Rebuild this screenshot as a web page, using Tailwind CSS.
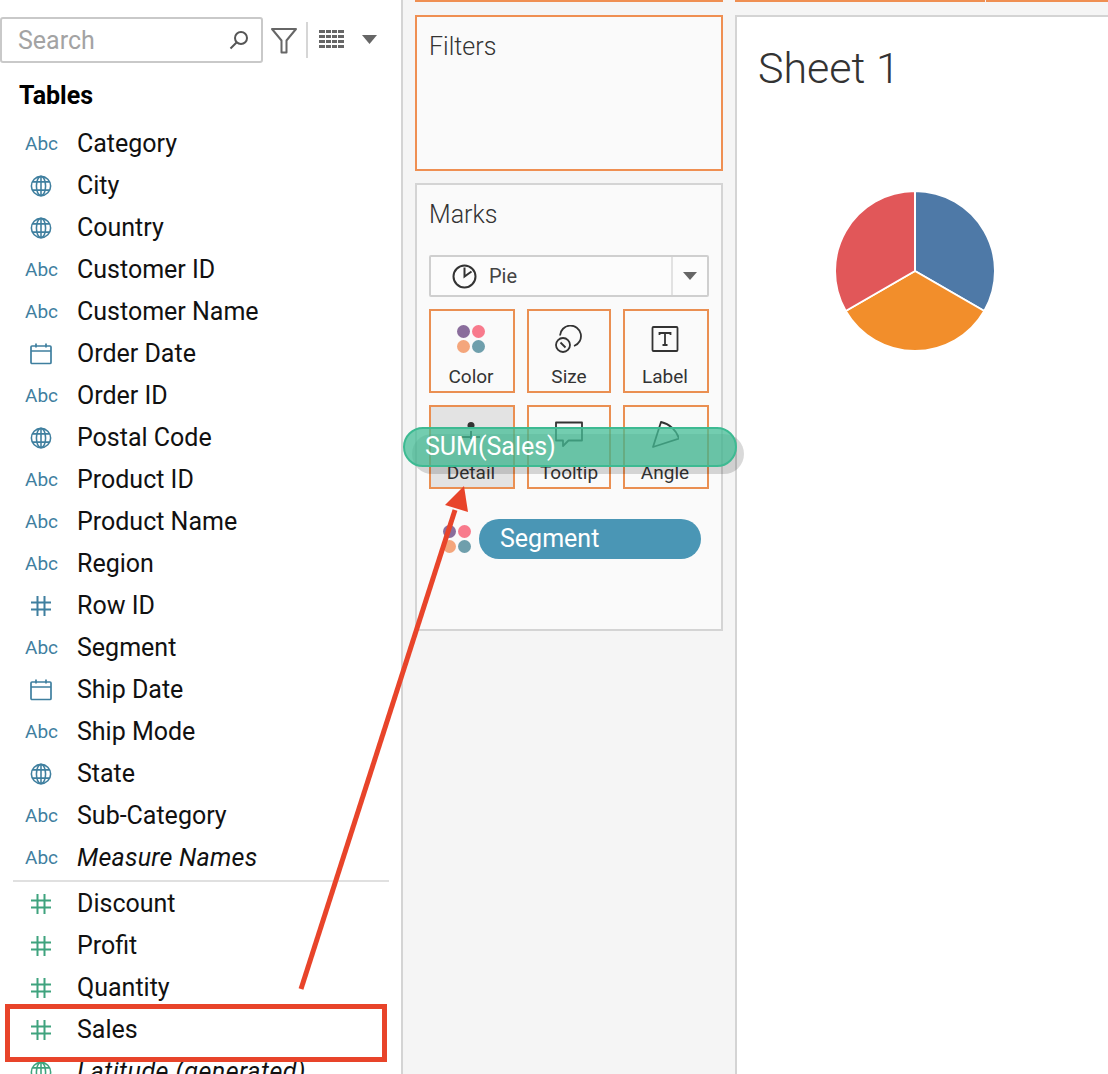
<!DOCTYPE html>
<html lang="en">
<head>
<meta charset="UTF-8">
<title>Sheet 1</title>
<script src="https://cdn.jsdelivr.net/npm/@tailwindcss/browser@4"></script>
</head>
<body class="bg-white">
<svg class="hidden">
  <symbol id="globe" viewBox="0 0 24 24" fill="none" stroke="currentColor" stroke-width="1.7">
    <circle cx="12" cy="12" r="10.5"/><ellipse cx="12" cy="12" rx="5" ry="10.5"/><path d="M12 1.5v21M2.6 7.5h18.8M2.6 16.5h18.8"/>
  </symbol>
  <symbol id="hash" viewBox="0 0 20 20" fill="none" stroke="currentColor" stroke-width="2">
    <path d="M6.5 0v20M13.5 0v20M0 6.5h20M0 13.5h20"/>
  </symbol>
  <symbol id="cal" viewBox="0 0 22 22" fill="none" stroke="currentColor" stroke-width="1.7">
    <rect x="1" y="3" width="20" height="17.5" rx="1"/><path d="M1 8h20M6 0.5v4M16 0.5v4"/>
  </symbol>
  <symbol id="dots" viewBox="0 0 28 28">
    <circle cx="6.5" cy="6.5" r="6.5" fill="#8a6d9c"/><circle cx="21.5" cy="6.5" r="6.5" fill="#f87a8c"/>
    <circle cx="6.5" cy="21.5" r="6.5" fill="#f4a67c"/><circle cx="21.5" cy="21.5" r="6.5" fill="#6f9fac"/>
  </symbol>
</svg>

<div class="relative flex h-[1074px] w-[1108px] overflow-hidden font-['Roboto',sans-serif] text-[25px] text-[#111]">

  <aside class="w-[401px] shrink-0 bg-white">
    <div class="flex h-[63px] items-end">
      <div class="flex h-[46px] w-[263px] items-center justify-between rounded-[3px] border-2 border-[#c9c9c9] pl-[16px] pr-[12px] text-[#a3a3a3]">
        <span class="pt-[2px]">Search</span>
        <svg class="h-[20px] w-[20px]" viewBox="0 0 20 20" fill="none" stroke="#555" stroke-width="2"><circle cx="12" cy="8" r="6"/><path d="M7.5 12.5 1.5 18.5"/></svg>
      </div>
      <svg class="mb-[9px] ml-[8px] h-[26px] w-[26px]" viewBox="0 0 26 26" fill="none" stroke="#666" stroke-width="2" stroke-linejoin="round"><path d="M1 1h24l-9.500 11.500V24.500h-5V12.500z"/></svg>
      <div class="mb-[5px] ml-[9px] h-[36px] w-[2px] bg-[#d6d6d6]"></div>
      <svg class="mb-[15px] ml-[11px] h-[18px] w-[25px]" viewBox="0 0 25 18" fill="#666"><path d="M0 0h25v3H0zM0 5h25v3H0zM0 10h25v3H0zM0 15h25v3H0z"/><path d="M6 0h1v18H6zM12 0h1v18h-1zM18 0h1v18h-1z" fill="#fff"/></svg>
      <svg class="mb-[19px] ml-[18px] h-[9px] w-[15px]" viewBox="0 0 15 9" fill="#666"><path d="M0 0h15L7.500 9z"/></svg>
    </div>
    <h2 class="mt-[16px] pl-[19px] text-[25px] leading-[34px] font-bold text-black">Tables</h2>

    <div class="mt-[10px]">
      <div class="flex h-[42px] items-center"><span class="w-[77px] pl-[25px] text-[19px] text-[#3f7f9f]">Abc</span>Category</div>
      <div class="flex h-[42px] items-center"><span class="w-[77px] pl-[30px] text-[#3f7f9f]"><svg class="h-[22px] w-[22px]"><use href="#globe"/></svg></span>City</div>
      <div class="flex h-[42px] items-center"><span class="w-[77px] pl-[30px] text-[#3f7f9f]"><svg class="h-[22px] w-[22px]"><use href="#globe"/></svg></span>Country</div>
      <div class="flex h-[42px] items-center"><span class="w-[77px] pl-[25px] text-[19px] text-[#3f7f9f]">Abc</span>Customer ID</div>
      <div class="flex h-[42px] items-center"><span class="w-[77px] pl-[25px] text-[19px] text-[#3f7f9f]">Abc</span>Customer Name</div>
      <div class="flex h-[42px] items-center"><span class="w-[77px] pl-[30px] text-[#3f7f9f]"><svg class="h-[22px] w-[22px]"><use href="#cal"/></svg></span>Order Date</div>
      <div class="flex h-[42px] items-center"><span class="w-[77px] pl-[25px] text-[19px] text-[#3f7f9f]">Abc</span>Order ID</div>
      <div class="flex h-[42px] items-center"><span class="w-[77px] pl-[30px] text-[#3f7f9f]"><svg class="h-[22px] w-[22px]"><use href="#globe"/></svg></span>Postal Code</div>
      <div class="flex h-[42px] items-center"><span class="w-[77px] pl-[25px] text-[19px] text-[#3f7f9f]">Abc</span>Product ID</div>
      <div class="flex h-[42px] items-center"><span class="w-[77px] pl-[25px] text-[19px] text-[#3f7f9f]">Abc</span>Product Name</div>
      <div class="flex h-[42px] items-center"><span class="w-[77px] pl-[25px] text-[19px] text-[#3f7f9f]">Abc</span>Region</div>
      <div class="flex h-[42px] items-center"><span class="w-[77px] pl-[31px] text-[#3f7f9f]"><svg class="h-[20px] w-[20px]"><use href="#hash"/></svg></span>Row ID</div>
      <div class="flex h-[42px] items-center"><span class="w-[77px] pl-[25px] text-[19px] text-[#3f7f9f]">Abc</span>Segment</div>
      <div class="flex h-[42px] items-center"><span class="w-[77px] pl-[30px] text-[#3f7f9f]"><svg class="h-[22px] w-[22px]"><use href="#cal"/></svg></span>Ship Date</div>
      <div class="flex h-[42px] items-center"><span class="w-[77px] pl-[25px] text-[19px] text-[#3f7f9f]">Abc</span>Ship Mode</div>
      <div class="flex h-[42px] items-center"><span class="w-[77px] pl-[30px] text-[#3f7f9f]"><svg class="h-[22px] w-[22px]"><use href="#globe"/></svg></span>State</div>
      <div class="flex h-[42px] items-center"><span class="w-[77px] pl-[25px] text-[19px] text-[#3f7f9f]">Abc</span>Sub-Category</div>
      <div class="flex h-[42px] items-center"><span class="w-[77px] pl-[25px] text-[19px] text-[#3f7f9f]">Abc</span><i class="tracking-[0.25px]">Measure Names</i></div>
    </div>
    <div class="mx-[13px] my-[1px] h-[2px] w-[376px] bg-[#e0e0e0]"></div>
    <div>
      <div class="flex h-[42px] items-center"><span class="w-[77px] pl-[31px] text-[#3fa37e]"><svg class="h-[20px] w-[20px]"><use href="#hash"/></svg></span>Discount</div>
      <div class="flex h-[42px] items-center"><span class="w-[77px] pl-[31px] text-[#3fa37e]"><svg class="h-[20px] w-[20px]"><use href="#hash"/></svg></span>Profit</div>
      <div class="flex h-[42px] items-center"><span class="w-[77px] pl-[31px] text-[#3fa37e]"><svg class="h-[20px] w-[20px]"><use href="#hash"/></svg></span>Quantity</div>
      <div class="flex h-[42px] items-center"><span class="w-[77px] pl-[31px] text-[#3fa37e]"><svg class="h-[20px] w-[20px]"><use href="#hash"/></svg></span>Sales</div>
      <div class="flex h-[42px] items-center"><span class="w-[77px] pl-[30px] text-[#3fa37e]"><svg class="h-[22px] w-[22px]"><use href="#globe"/></svg></span><i class="tracking-[0.5px]">Latitude (generated)</i></div>
    </div>
  </aside>

  <div class="flex flex-1 border-l-2 border-[#d4d4d4] bg-[#f5f5f5] pl-[12px]">
    <div class="w-[308px] shrink-0">
      <div class="h-[2px] bg-[#ef8f52]"></div>
      <section class="mt-[13px] h-[156px] border-2 border-[#ef8f52] bg-[#fafafa] pl-[12px] pt-[13px] leading-[34px] font-light text-[#333]">Filters</section>
      <section class="mt-[12px] h-[448px] border-2 border-[#d4d4d4] bg-[#fafafa] px-[12px] pt-[15px]">
        <div class="font-light leading-[30px] text-[#333]">Marks</div>
        <div class="mt-[25px] flex h-[42px] items-center rounded-[2px] border-2 border-[#cfcfcf] bg-white/40 text-[20px] text-[#444]">
          <svg class="ml-[21px] h-[25px] w-[25px]" viewBox="0 0 25 25" fill="none" stroke="#333" stroke-width="2"><circle cx="12.500" cy="12.500" r="11"/><path d="M12.500 3.500v9l7-5"/></svg>
          <span class="ml-[12px] flex-1">Pie</span>
          <div class="flex h-full w-[36px] items-center justify-center border-l-2 border-[#e2e2e2]">
            <svg class="h-[8px] w-[14px]" viewBox="0 0 14 8" fill="#666"><path d="M0 0h14L7 8z"/></svg>
          </div>
        </div>
        <div class="mt-[12px] grid w-[280px] grid-cols-[86px_84px_86px] gap-x-[12px] gap-y-[12px] text-[19px] text-[#333]">
          <div class="flex h-[84px] flex-col items-center border-2 border-[#ea8f52] pr-[2px] pt-[14px]"><svg class="h-[28px] w-[28px]"><use href="#dots"/></svg><span class="mt-[12px] leading-[24px]">Color</span></div>
          <div class="flex h-[84px] flex-col items-center border-2 border-[#ea8f52] pt-[14px]">
            <svg class="h-[28px] w-[28px]" viewBox="0 0 28 28" fill="none" stroke="#333" stroke-width="1.800"><path d="M5 10.500A10.500 10.500 0 1 1 19 21"/><circle cx="8" cy="20" r="7"/><path d="m5.500 17.500 5 5"/></svg>
            <span class="mt-[12px] leading-[24px]">Size</span></div>
          <div class="flex h-[84px] flex-col items-center border-2 border-[#ea8f52] pr-[2px] pt-[14px]">
            <svg class="h-[28px] w-[28px]" viewBox="0 0 28 28" fill="none" stroke="#333" stroke-width="1.800"><rect x="1.500" y="2" width="25" height="24" rx="1"/><path d="M8.500 10V8h11v2M14 8v12M11.500 20h5"/></svg>
            <span class="mt-[12px] leading-[24px]">Label</span></div>
          <div class="flex h-[84px] flex-col items-center border-2 border-[#ea8f52] bg-[#e3e3e3] pr-[2px] pt-[14px]">
            <svg class="h-[28px] w-[28px]" viewBox="0 0 28 28" fill="#333"><circle cx="14" cy="4.500" r="3.500"/><path d="M13 10h2v8h-2zM5 15h18v2H5z"/></svg>
            <span class="mt-[12px] leading-[24px]">Detail</span></div>
          <div class="flex h-[84px] flex-col items-center border-2 border-[#ea8f52] pt-[14px]">
            <svg class="h-[28px] w-[28px]" viewBox="0 0 28 28" fill="none" stroke="#333" stroke-width="1.800" stroke-linejoin="round"><path d="M1 1.500h26v18H13.500L8 25v-5.500H1z"/></svg>
            <span class="mt-[12px] leading-[24px]">Tooltip</span></div>
          <div class="flex h-[84px] flex-col items-center border-2 border-[#ea8f52] pr-[2px] pt-[14px]">
            <svg class="h-[28px] w-[28px]" viewBox="0 0 28 28" fill="none" stroke="#333" stroke-width="1.800" stroke-linejoin="round"><path d="M10 1 2 26l26-8.500A24 24 0 0 0 10 1z"/></svg>
            <span class="mt-[12px] leading-[24px]">Angle</span></div>
        </div>
        <div class="ml-[14px] mt-[30px] flex items-center">
          <svg class="h-[28px] w-[28px]"><use href="#dots"/></svg>
          <div class="ml-[8px] flex h-[40px] w-[222px] items-center rounded-full bg-[#4a96b5] pl-[21px] text-white">Segment</div>
        </div>
      </section>
    </div>

    <div class="ml-[12px] flex-1">
      <div class="flex h-[2px]"><div class="w-[250px] bg-[#ef8f52]"></div><div class="ml-[1px] flex-1 bg-[#ef8f52]"></div></div>
      <main class="mt-[13px] h-[1100px] border-l-2 border-t-2 border-[#d4d4d4] bg-white pl-[21px] pt-[23px]">
        <h1 class="text-[43px] leading-[56px] font-light text-[#333]">Sheet 1</h1>
        <svg class="ml-[76px] mt-[94px] h-[162px] w-[162px]" viewBox="-81 -81 162 162" stroke="#fff" stroke-width="2">
          <path d="M0 0V-80A80 80 0 0 1 69.300 40z" fill="#4e79a7"/>
          <path d="M0 0 69.300 40A80 80 0 0 1 -69.300 40z" fill="#f28e2b"/>
          <path d="M0 0-69.300 40A80 80 0 0 1 0 -80z" fill="#e15759"/>
        </svg>
      </main>
    </div>
  </div>

  <!-- drag pill -->
  <div class="absolute left-[412px] top-[434px] h-[40px] w-[332px] rounded-full bg-black/15"></div>
  <div class="absolute left-[403px] top-[427px] flex h-[40px] w-[334px] items-center rounded-full border-2 border-[#3dba92] bg-[#45bd97]/75 pl-[20px] text-white">SUM(Sales)</div>

  <!-- annotation -->
  <div class="absolute left-[5px] top-[1004px] h-[58px] w-[382px] border-[5px] border-[#e8442a]"></div>
  <svg class="absolute left-0 top-0 h-[1074px] w-[1108px]" viewBox="0 0 1108 1074" fill="#e8442a">
    <path d="M301 989 455 510" stroke="#e8442a" stroke-width="5" fill="none"/>
    <path d="M464 486 445 505 468 512z"/>
  </svg>
</div>
</body>
</html>
